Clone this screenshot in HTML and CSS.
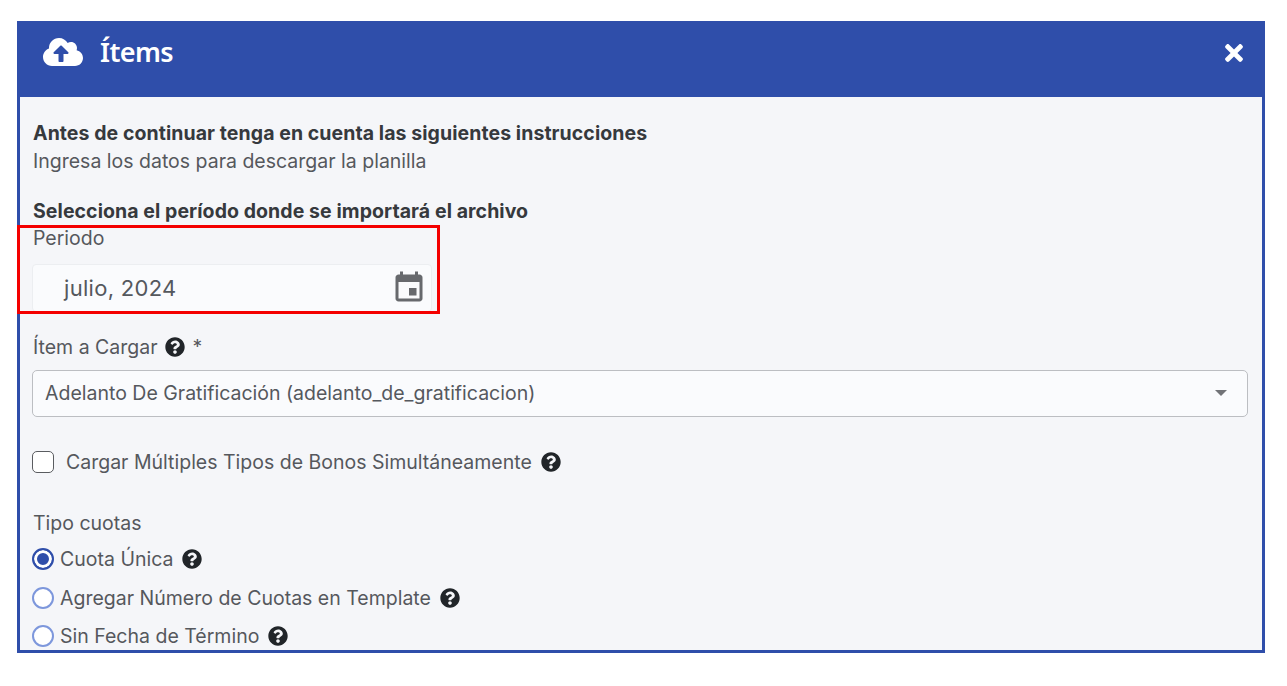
FILE: index.html
```html
<!DOCTYPE html>
<html lang="en">
<head>
    <meta charset="UTF-8">
    <title>Ítems</title>
    <link rel="stylesheet" href="styles.css">
</head>
<body>
    <svg class="icon-defs" width="0" height="0">
        <symbol id="help" viewBox="0 0 512 512">
            <path d="M504 256c0 136.997-111.043 248-248 248S8 392.997 8 256C8 119.083 119.043 8 256 8s248 111.083 248 248zM262.655 90c-54.497 0-89.255 22.957-116.549 63.758-3.536 5.286-2.353 12.415 2.715 16.258l34.699 26.31c5.205 3.947 12.621 3.008 16.665-2.122 17.864-22.658 30.113-35.797 57.303-35.797 20.429 0 45.698 13.148 45.698 32.958 0 14.976-12.363 22.667-32.534 33.976C247.128 238.528 216 254.941 216 296v4c0 6.627 5.373 12 12 12h56c6.627 0 12-5.373 12-12v-1.333c0-28.462 83.186-29.647 83.186-106.667 0-58.002-60.165-102-116.531-102zM256 338c-25.365 0-46 20.635-46 46 0 25.364 20.635 46 46 46s46-20.636 46-46c0-25.365-20.635-46-46-46z"/>
        </symbol>
    </svg>

    <div class="modal">
        <header class="modal-header">
            <div class="modal-title">
                <svg class="icon-cloud" viewBox="0 0 640 512"><path d="M537.6 226.6c4.1-10.7 6.4-22.4 6.4-34.6 0-53-43-96-96-96-19.7 0-38.1 6-53.3 16.2C367 64.2 315.3 32 256 32c-88.4 0-160 71.6-160 160 0 2.7.1 5.4.2 8.1C40.2 219.8 0 273.2 0 336c0 79.5 64.5 144 144 144h368c70.7 0 128-57.3 128-128 0-61.9-44-113.6-102.4-125.4zM393.4 288H328v112c0 8.8-7.2 16-16 16h-48c-8.8 0-16-7.2-16-16V288h-65.4c-14.3 0-21.4-17.2-11.3-27.3l105.4-105.4c6.2-6.2 16.4-6.2 22.6 0l105.4 105.4c10.1 10.1 3 27.3-11.3 27.3z"/></svg>
                <h1>Ítems</h1>
            </div>
            <svg class="icon-close" viewBox="0 0 352 512"><path d="M242.72 256l100.07-100.07c12.28-12.28 12.28-32.19 0-44.48l-22.24-22.24c-12.28-12.28-32.19-12.28-44.48 0L176 189.28 75.93 89.21c-12.28-12.28-32.19-12.28-44.48 0L9.21 111.45c-12.28 12.28-12.28 32.19 0 44.48L109.28 256 9.21 356.07c-12.28 12.28-12.28 32.19 0 44.48l22.24 22.24c12.28 12.28 32.2 12.28 44.48 0L176 322.72l100.07 100.07c12.28 12.28 32.2 12.28 44.48 0l22.24-22.24c12.28-12.28 12.28-32.19 0-44.48L242.72 256z"/></svg>
        </header>

        <div class="modal-body">
            <p class="strong">Antes de continuar tenga en cuenta las siguientes instrucciones</p>
            <p class="instructions">Ingresa los datos para descargar la planilla</p>
            <p class="strong period-title">Selecciona el período donde se importará el archivo</p>
            <p class="field-label">Periodo</p>
            <div class="date-input">
                <span>julio, 2024</span>
                <svg class="icon-calendar" viewBox="0 0 24 24"><path d="M17 12h-5v5h5v-5zM16 1v2H8V1H6v2H5c-1.11 0-1.99.9-1.99 2L3 19c0 1.1.89 2 2 2h14c1.1 0 2-.9 2-2V5c0-1.1-.9-2-2-2h-1V1h-2zm3 18H5V8h14v11z"/></svg>
            </div>

            <p class="field-label item-label">Ítem a Cargar <svg class="icon-help"><use href="#help"/></svg> *</p>
            <div class="select">
                <span>Adelanto De Gratificación (adelanto_de_gratificacion)</span>
                <span class="select-arrow"></span>
            </div>

            <div class="check-row">
                <span class="checkbox"></span>
                <span>Cargar Múltiples Tipos de Bonos Simultáneamente</span>
                <svg class="icon-help"><use href="#help"/></svg>
            </div>

            <p class="field-label quota-label">Tipo cuotas</p>
            <div class="radio-row">
                <span class="radio radio-on"></span>
                <span>Cuota Única</span>
                <svg class="icon-help"><use href="#help"/></svg>
            </div>
            <div class="radio-row">
                <span class="radio"></span>
                <span>Agregar Número de Cuotas en Template</span>
                <svg class="icon-help"><use href="#help"/></svg>
            </div>
            <div class="radio-row">
                <span class="radio"></span>
                <span>Sin Fecha de Término</span>
                <svg class="icon-help"><use href="#help"/></svg>
            </div>
        </div>

        <div class="highlight"></div>
    </div>
</body>
</html>
```

FILE: styles.css
```css
body {
    font-family: Inter, "Liberation Sans", sans-serif;
    font-size: 19.5px;
    color: #55585d;
    background-color: #fff;
    margin: 0;
    padding: 0;
}

p {
    margin: 0;
    padding-left: 1px;
}

.icon-defs {
    display: block;
}

.modal {
    position: relative;
    display: flex;
    flex-direction: column;
    height: 629px;
    margin: 21px 22px 0 17px;
    border: 3px solid #2f4eaa;
    border-top: none;
    background-color: #f5f6f9;
}

.modal-header {
    display: flex;
    flex-shrink: 0;
    align-items: flex-start;
    justify-content: space-between;
    height: 76px;
    box-sizing: border-box;
    padding: 13px 19px 0 23px;
    background-color: #2f4eaa;
    color: #fff;
}

.modal-title {
    display: flex;
    align-items: center;
    gap: 17px;
}

.modal-title h1 {
    margin: 0;
    font-family: "Noto Sans", sans-serif;
    font-size: 27px;
    font-weight: 600;
    letter-spacing: -0.6px;
    line-height: 36px;
}

.icon-cloud {
    width: 40px;
    height: 32px;
    fill: #fff;
}

.icon-close {
    width: 18px;
    height: 26px;
    margin-top: 6px;
    fill: #fff;
}

.modal-body {
    flex: 1;
    min-height: 0;
    overflow: hidden;
    padding: 22px 0 0 12px;
    line-height: 28px;
}

.strong {
    font-weight: 700;
    letter-spacing: 0.07px;
    color: #36393d;
}

.period-title {
    margin-top: 22px;
}

.field-label {
    margin-top: 0;
}

.period-title + .field-label {
    margin-top: -1px;
}

.date-input {
    display: flex;
    align-items: center;
    justify-content: space-between;
    width: 400px;
    height: 48px;
    box-sizing: border-box;
    margin-top: 12px;
    padding: 0 4px 0 31px;
    background-color: #fafbfd;
    border: 1px solid #eceef1;
    border-radius: 4px;
    font-size: 22px;
    letter-spacing: 0.3px;
}

.icon-calendar {
    width: 36px;
    height: 36px;
    fill: #67696d;
}

.field-label.item-label {
    display: flex;
    align-items: center;
    gap: 7.5px;
    margin-top: 21px;
}

.icon-help {
    width: 20px;
    height: 20px;
    fill: #212529;
    flex-shrink: 0;
}

.select {
    display: flex;
    align-items: center;
    justify-content: space-between;
    width: 1216px;
    height: 47px;
    box-sizing: border-box;
    margin-top: 9px;
    padding: 0 20px 1px 12px;
    background-color: #fafbfd;
    border: 1px solid #bcbec2;
    border-radius: 5px;
}

.select-arrow {
    width: 0;
    height: 0;
    border-left: 6px solid transparent;
    border-right: 6px solid transparent;
    border-top: 6px solid #717377;
}

.check-row {
    display: flex;
    align-items: center;
    gap: 12px;
    margin-top: 31px;
}

.checkbox {
    width: 22px;
    height: 22px;
    box-sizing: border-box;
    background-color: #fff;
    border: 1px solid #5a5c60;
    border-radius: 5px;
}

.check-row .icon-help {
    margin-left: -3px;
}

.field-label.quota-label {
    margin-top: 33px;
}

.radio-row {
    display: flex;
    align-items: center;
    gap: 6px;
    height: 28px;
    margin-top: 10.5px;
}

.quota-label + .radio-row {
    margin-top: 8px;
}

.radio-row .icon-help {
    margin-left: 3px;
}

.radio {
    width: 22px;
    height: 22px;
    box-sizing: border-box;
    background-color: #fff;
    border: 2px solid #7d97dc;
    border-radius: 50%;
}

.radio-on {
    border-color: #2f4eaa;
    background-color: #2f4eaa;
    box-shadow: inset 0 0 0 3px #fff;
}

/* red box drawn over the period field */
.highlight {
    position: absolute;
    left: -3px;
    top: 204px;
    width: 423px;
    height: 89px;
    box-sizing: border-box;
    border: 3px solid #f40000;
}
```
